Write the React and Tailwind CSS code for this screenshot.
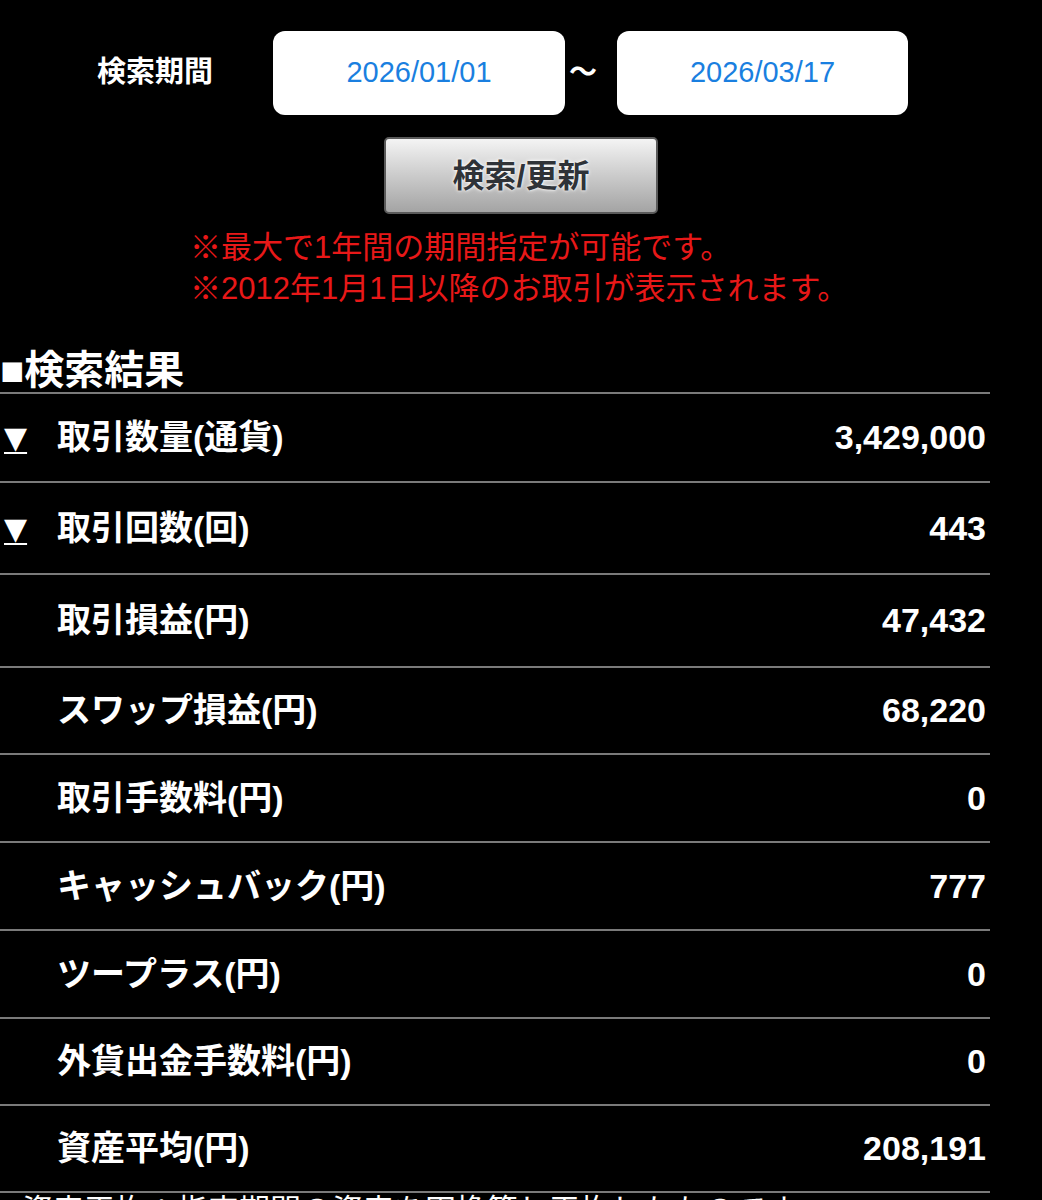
import React from 'react';

const rows = [
  { label: '取引数量(通貨)', value: '3,429,000', arrow: true, h: 'h-[89px]' },
  { label: '取引回数(回)', value: '443', arrow: true, h: 'h-[92px]' },
  { label: '取引損益(円)', value: '47,432', h: 'h-[93px]' },
  { label: 'スワップ損益(円)', value: '68,220', h: 'h-[87px]' },
  { label: '取引手数料(円)', value: '0', h: 'h-[88px]' },
  { label: 'キャッシュバック(円)', value: '777', h: 'h-[88px]' },
  { label: 'ツープラス(円)', value: '0', h: 'h-[88px]' },
  { label: '外貨出金手数料(円)', value: '0', h: 'h-[87px]' },
  { label: '資産平均(円)', value: '208,191', h: 'h-[87px]' },
];

const DateBox = ({ value, w }) => (
  <div className={`${w} h-[84px] bg-white rounded-[12px] flex items-center justify-center text-[29px] text-[#1a7fe0]`}>
    {value}
  </div>
);

export default function App() {
  return (
    <div className="min-h-[1200px] bg-black text-white font-['Liberation_Sans','Noto_Sans_CJK_JP',sans-serif]">
      {/* search period */}
      <div className="pt-[31px] flex items-center">
        <div className="ml-[97px] w-[176px] text-[29px] font-bold">検索期間</div>
        <DateBox value="2026/01/01" w="w-[292px]" />
        <div className="w-[52px] pl-[4px] text-[28px] font-bold">～</div>
        <DateBox value="2026/03/17" w="w-[291px]" />
      </div>

      <div className="mt-[22px] flex justify-center">
        <button className="w-[274px] h-[77px] rounded-[5px] border-2 border-[#5a5a5a] bg-gradient-to-b from-[#f4f4f4] to-[#a4a4a4] text-[32px] font-bold text-[#2f3338] [text-shadow:0_0_4px_#fff,0_0_2px_#fff]">
          検索/更新
        </button>
      </div>

      <div className="mt-[13px] ml-[190px] text-[31px] leading-[41px] text-[#e81818]">
        <div>※最大で1年間の期間指定が可能です。</div>
        <div>※2012年1月1日以降のお取引が表示されます。</div>
      </div>

      {/* results */}
      <div className="w-[990px] mt-[39px]">
        <div className="h-[46px] border-b-2 border-[#7a7a7a] text-[40px] font-bold leading-[44px]">■検索結果</div>
        {rows.map((r, i) => (
          <div key={i} className={`${r.h} border-b-2 border-[#7a7a7a] flex items-center justify-between pr-[4px]`}>
            <div className="flex items-center">
              <div className="w-[57px] pl-[4px]">
                {r.arrow && (
                  <span className="text-[30px] font-bold underline decoration-2 underline-offset-[4px] font-['DejaVu_Sans',sans-serif]">▼</span>
                )}
              </div>
              <div className="text-[34px] font-bold">{r.label}</div>
            </div>
            <div className="text-[34px] font-bold">{r.value}</div>
          </div>
        ))}
        <div className="pl-[22px] pt-[2px] text-[31px] leading-none whitespace-nowrap">資産平均：指定期間の資産を円換算し平均したものです。</div>
      </div>
    </div>
  );
}
